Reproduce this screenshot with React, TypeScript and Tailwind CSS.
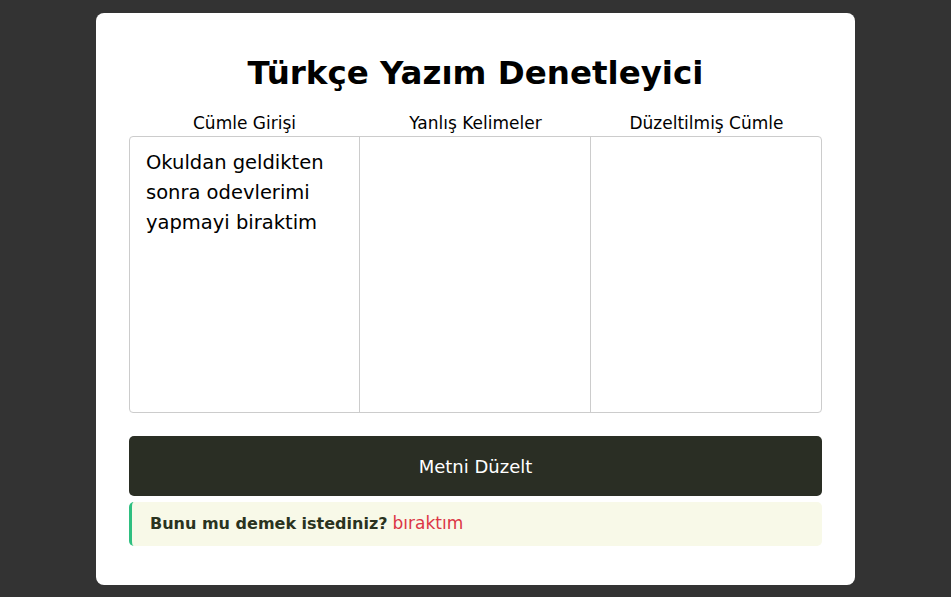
import { useState } from 'react';

const columns = ['Cümle Girişi', 'Yanlış Kelimeler', 'Düzeltilmiş Cümle'];

export default function App() {
  const [text, setText] = useState('Okuldan geldikten sonra odevlerimi yapmayi biraktim');

  return (
    <div className="min-h-[597px] w-full bg-[#333333] pt-[13px] font-['DejaVu_Sans',sans-serif]">
      <div className="mx-auto w-[759px] rounded-lg bg-white px-[33px] pt-[36px] pb-[39px]">
        <h1 className="text-center text-[32.5px] font-bold leading-[48px] text-black">
          Türkçe Yazım Denetleyici
        </h1>

        <div className="mt-[14px] grid grid-cols-3 text-center text-[17px] leading-[25px] text-black">
          {columns.map((c) => (
            <span key={c}>{c}</span>
          ))}
        </div>

        <div className="grid h-[277px] grid-cols-3 rounded border border-[#cccccc]">
          <textarea
            value={text}
            onChange={(e) => setText(e.target.value)}
            className="resize-none border-r border-[#cccccc] px-4 py-[11px] text-[19.5px] leading-[30px] text-black outline-none"
          />
          <div className="border-r border-[#cccccc]" />
          <div />
        </div>

        <button className="mt-[23px] h-[60px] w-full rounded-[5px] bg-[#2a2e24] text-[18px] text-white">
          Metni Düzelt
        </button>

        <div className="mt-[6px] flex h-[44px] items-center rounded-[5px] border-l-[3px] border-[#2fbf80] bg-[#f8f9e8] px-[18px] text-[16px]">
          <span className="font-bold text-[#2a3320]">Bunu mu demek istediniz?</span>
          <span className="ml-[5px] text-[17px] text-[#dc3545]">bıraktım</span>
        </div>
      </div>
    </div>
  );
}
